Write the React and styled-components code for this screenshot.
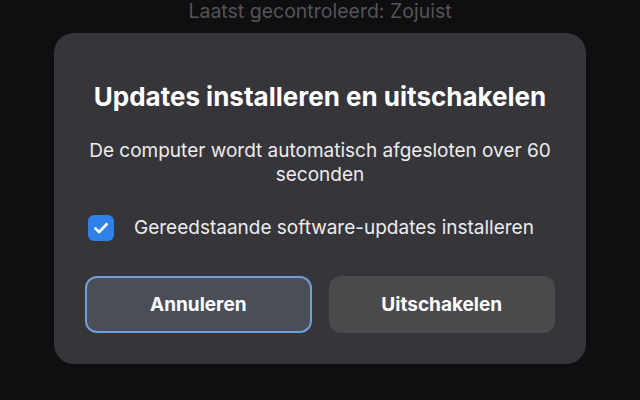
import React from "react";
import styled, { createGlobalStyle } from "styled-components";

const GlobalStyle = createGlobalStyle`
  html, body {
    margin: 0;
    padding: 0;
    background: #0f0f11;
    font-family: Inter, "Noto Sans", sans-serif;
  }
`;

const App = () => {
  return (
    <Page>
      <GlobalStyle />
      <LastChecked>Laatst gecontroleerd: Zojuist</LastChecked>
      <Dialog>
        <Title>Updates installeren en uitschakelen</Title>
        <Message>De computer wordt automatisch afgesloten over 60 seconden</Message>
        <CheckRow>
          <Box>
            <svg width="18" height="18" viewBox="0 0 24 24" fill="none">
              <path
                d="M4.5 12.5l5 5L19.5 7"
                stroke="#fff"
                strokeWidth="3.6"
                strokeLinecap="round"
                strokeLinejoin="round"
              />
            </svg>
          </Box>
          <CheckLabel>Gereedstaande software-updates installeren</CheckLabel>
        </CheckRow>
        <Actions>
          <Button $focused>Annuleren</Button>
          <Button>Uitschakelen</Button>
        </Actions>
      </Dialog>
    </Page>
  );
};

const Page = styled.div`
  width: 640px;
  height: 400px;
  display: flex;
  flex-direction: column;
  align-items: center;
  overflow: hidden;
`;
const LastChecked = styled.div`
  height: 22px;
  line-height: 22px;
  font-size: 19.5px;
  color: #545458;
  white-space: nowrap;
`;
const Dialog = styled.div`
  margin-top: 11px;
  width: 532px;
  height: 331px;
  box-sizing: border-box;
  padding: 48px 31px 0;
  background: #36353a;
  border-radius: 20px;
  display: flex;
  flex-direction: column;
  align-items: center;
`;
const Title = styled.h1`
  margin: 0;
  font-size: 26px;
  line-height: 32px;
  font-weight: 700;
  color: #ffffff;
  text-align: center;
  white-space: nowrap;
`;
const Message = styled.p`
  margin: 26px 0 0;
  font-size: 19px;
  line-height: 24px;
  color: #ececee;
  text-align: center;
`;
const CheckRow = styled.label`
  margin-top: 28px;
  align-self: stretch;
  display: flex;
  align-items: center;
  gap: 20px;
  padding-left: 3px;
`;
const Box = styled.span`
  width: 26px;
  height: 26px;
  border-radius: 6px;
  background: #2f80e8;
  display: flex;
  align-items: center;
  justify-content: center;
`;
const CheckLabel = styled.span`
  font-size: 19px;
  line-height: 24px;
  color: #ececee;
`;
const Actions = styled.div`
  margin-top: 35px;
  align-self: stretch;
  display: grid;
  grid-template-columns: 1fr 1fr;
  gap: 17px;
`;
const Button = styled.button`
  height: 57px;
  box-sizing: border-box;
  border-radius: 12px;
  border: 2px solid ${(p) => (p.$focused ? "#6f9fd8" : "transparent")};
  background: ${(p) => (p.$focused ? "#4b4e57" : "#4a4a4d")};
  color: #ffffff;
  font-family: Inter, "Noto Sans", sans-serif;
  font-size: 19px;
  font-weight: 700;
`;

export default App;
